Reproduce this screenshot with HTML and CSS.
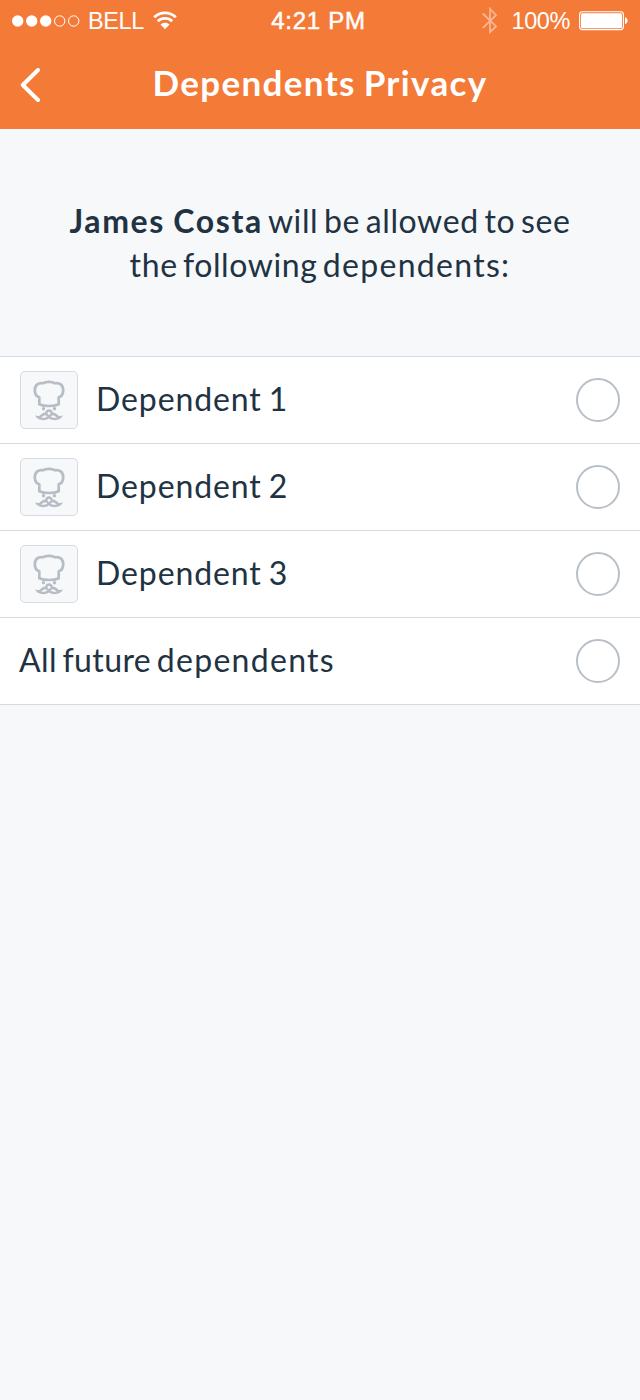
FILE: index.html
```html
<!DOCTYPE html>
<html lang="en">
<head>
<meta charset="utf-8">
<title>Dependents Privacy</title>
<link rel="stylesheet" href="styles.css">
</head>
<body>
<svg class="defs" width="0" height="0">
  <symbol id="chef" viewBox="0 0 56 56">
    <path fill="none" stroke="#b7bdc4" stroke-width="2.7" stroke-linejoin="round" d="M18.3 32.2V25.2C15 24.3 13.8 21.8 13.8 18.2C13.8 13 17.6 10.3 22.2 11.3C24.5 9.3 31.5 9.3 33.8 11.3C38.4 10.3 42.2 13 42.2 18.2C42.2 21.8 41 24.3 37.7 25.2V32.2C33 34.6 23 34.6 18.3 32.2Z"/>
    <path fill="#b7bdc4" fill-rule="evenodd" d="M28 37.2C30.2 37.2 31.6 38.6 31.8 40.6C34 40.8 35.8 42.2 37.2 43.5C38.8 44.5 40.5 44 42 43.3C39.9 48.5 32.3 49.5 28 46.5C23.7 49.5 16.1 48.5 14 43.3C15.5 44 17.2 44.5 18.8 43.5C20.2 42.2 22 40.8 24.2 40.6C24.4 38.6 25.8 37.2 28 37.2ZM28 39.7A1.5 1.5 0 1 0 28 42.7A1.5 1.5 0 1 0 28 39.7ZM24.6 43.2C22.8 43.3 21.4 44.2 20.2 45.6C22.6 46.2 24.8 45.6 26.4 44.5ZM31.4 43.2L29.6 44.5C31.2 45.6 33.4 46.2 35.8 45.6C34.6 44.2 33.2 43.3 31.4 43.2Z"/>
    <circle cx="22.5" cy="36.7" r="1.7" fill="#b7bdc4"/>
    <circle cx="33.5" cy="36.7" r="1.7" fill="#b7bdc4"/>
  </symbol>
</svg>
<header class="header">
  <div class="status">
    <div class="carrier">
      <svg width="68" height="12" viewBox="0 0 68 12" fill="#fff"><circle cx="5.7" cy="6" r="5.7"/><circle cx="19.7" cy="6" r="5.7"/><circle cx="33.7" cy="6" r="5.7"/><g fill="none" stroke="#fff"><circle cx="47.7" cy="6" r="5.2"/><circle cx="61.7" cy="6" r="5.2"/></g></svg>
      <span class="bell">BELL</span>
      <svg class="wifi" width="24" height="19" viewBox="0 0 24 19"><path d="M1.2 6.2C7.2 .4 16.8 .4 22.8 6.2M4.8 10.2C8.8 6.5 15.2 6.5 19.2 10.2" fill="none" stroke="#fff" stroke-width="2.8"/><path d="M7.5 13.6C10 11.2 14 11.2 16.5 13.6L12 18.2Z" fill="#fff"/></svg>
    </div>
    <span class="time">4:21 PM</span>
    <div class="power">
      <svg width="16" height="28" viewBox="0 0 16 28" fill="none" stroke="#fff" stroke-width="1.8" opacity=".45"><path d="M.8 6.5L14 19.4L8 25.2V1.8L14 8.2L.8 20.8"/></svg>
      <span class="percent">100%</span>
      <svg class="battery" width="50" height="20" viewBox="0 0 50 20"><rect x=".6" y=".8" width="43.8" height="17.8" rx="2.8" fill="none" stroke="#fff" stroke-width="1.1"/><rect x="2" y="2.2" width="41" height="15" rx="1.5" fill="#fff"/><path d="M46 6.3C49.5 7.5 49.5 12 46 13.2Z" fill="#fff"/></svg>
    </div>
  </div>
  <div class="nav">
    <svg class="back" width="20" height="34" viewBox="0 0 20 34"><path d="M18 2L2.8 17L18 32" fill="none" stroke="#fff" stroke-width="4" stroke-linecap="round" stroke-linejoin="round"/></svg>
    <h1 class="title">Dependents Privacy</h1>
  </div>
</header>
<main>
  <p class="intro"><span class="line one"><b>James Costa</b> will be allowed to see</span><span class="line two">the following <span class="wide">dependents:</span></span></p>
  <ul class="list">
    <li class="row"><span class="avatar"><svg width="56" height="56"><use href="#chef"/></svg></span><span class="name">Dependent 1</span><span class="radio"></span></li>
    <li class="row"><span class="avatar"><svg width="56" height="56"><use href="#chef"/></svg></span><span class="name">Dependent 2</span><span class="radio"></span></li>
    <li class="row"><span class="avatar"><svg width="56" height="56"><use href="#chef"/></svg></span><span class="name">Dependent 3</span><span class="radio"></span></li>
    <li class="row"><span class="name future">All future <span class="wide">dependents</span></span><span class="radio"></span></li>
  </ul>
</main>
</body>
</html>
```
FILE: styles.css
```css
* { box-sizing: border-box; }
body { margin: 0; min-height: 1400px; background: #f7f8fa; color: #213242; font-family: Lato, sans-serif; }
svg { display: block; flex: none; }
.defs { position: absolute; }
.header { height: 129px; background: #f47a38; color: #fff; }
.status { height: 41px; display: grid; grid-template-columns: 1fr auto 1fr; align-items: center; padding: 0 11px 0 12px; font: 24px/41px "Liberation Sans", sans-serif; }
.carrier, .power { display: flex; align-items: center; white-space: nowrap; }
.power { justify-content: flex-end; }
.bell { margin-left: 8px; padding-top: 2px; width: 65px; font-size: 23.5px; letter-spacing: -.4px; line-height: 39px; }
.time { font-size: 24px; -webkit-text-stroke: .5px #fff; letter-spacing: .75px; margin-right: 4px; }
.percent { margin-left: 13px; margin-right: 9px; padding-top: 2px; font-size: 23.5px; letter-spacing: -.4px; line-height: 39px; }
.nav { height: 88px; display: grid; grid-template-columns: 20px 1fr 20px; align-items: center; padding: 0 20px; }
.title { margin: -7px 0 0; text-align: center; font-size: 35px; line-height: 44px; font-weight: 700; white-space: nowrap; letter-spacing: 1.35px; word-spacing: -2px; }
.intro { margin: 0; height: 227px; padding-top: 70px; text-align: center; font-size: 32px; line-height: 44px; }
.intro b { letter-spacing: 1.6px; word-spacing: -1px; }
.line { display: block; white-space: nowrap; }
.one { letter-spacing: .6px; word-spacing: -3px; }
.two { letter-spacing: .6px; word-spacing: -3.5px; }
.wide { letter-spacing: 1.3px; }
.list { margin: 0; padding: 0; list-style: none; border-top: 1px solid #d5dbe3; background: #fff; }
.row { height: 87px; padding: 0 20px; display: flex; align-items: center; border-bottom: 1px solid #d5dbe3; }
.avatar { width: 58px; height: 58px; margin-right: 18px; border: 1px solid #d5dbe3; border-radius: 5px; background: #f7f8fa; }
.name { flex: 1; padding-bottom: 2px; font-size: 32px; line-height: 44px; white-space: nowrap; letter-spacing: .9px; word-spacing: -2px; }
.future { margin-left: -1px; letter-spacing: .4px; word-spacing: -3px; }
.radio { width: 44px; height: 44px; border: 2px solid #b9bfc7; border-radius: 50%; }
```
